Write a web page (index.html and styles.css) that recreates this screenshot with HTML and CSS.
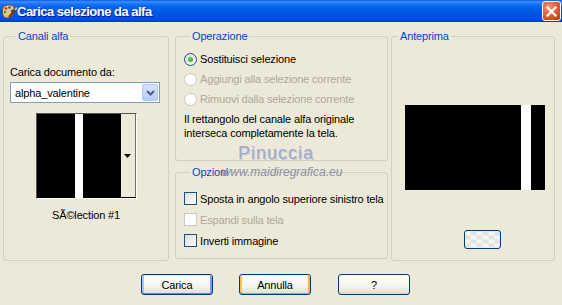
FILE: index.html
```html
<!DOCTYPE html>
<html lang="it">
<head>
    <meta charset="UTF-8">
    <title>Carica selezione da alfa</title>
    <link rel="stylesheet" href="styles.css">
</head>
<body>
    <div class="window">
        <div class="titlebar">
            <svg class="app-icon" width="16" height="16" viewBox="0 0 16 16">
                <path d="M2 4 C3 1 9 0 12 2 C14 3.5 13 6 11 6 C9.5 6 10 8 11.5 9 C13 10.5 10 14 6 14 C2 14 0.5 9 2 4 Z" fill="#E8C98A" stroke="#7A4E1E" stroke-width="1"/>
                <circle cx="5" cy="4.5" r="1.3" fill="#E02020"/>
                <circle cx="8.5" cy="3.5" r="1.2" fill="#2050E0"/>
                <circle cx="4" cy="8" r="1.2" fill="#20A020"/>
                <circle cx="6.5" cy="11" r="1.2" fill="#F0D000"/>
                <path d="M8 13 L15 5" stroke="#6B3A10" stroke-width="2"/>
                <path d="M14 6 L16 3.5" stroke="#C0C0C0" stroke-width="2"/>
            </svg>
            <span class="title">Carica selezione da alfa</span>
            <button class="close-btn">
                <svg width="11" height="11" viewBox="0 0 11 11">
                    <path d="M1.5 1.5 L9.5 9.5 M9.5 1.5 L1.5 9.5" stroke="#fff" stroke-width="2.2" stroke-linecap="square"/>
                </svg>
            </button>
        </div>

        <div class="dialog">
            <fieldset class="group channels">
                <legend>Canali alfa</legend>
                <div class="field-label">Carica documento da:</div>
                <div class="combo">
                    <span class="combo-text">alpha_valentine</span>
                    <span class="combo-btn">
                        <svg width="9" height="6" viewBox="0 0 9 6">
                            <path d="M1 1 L4.5 4.5 L8 1" fill="none" stroke="#4D6185" stroke-width="2"/>
                        </svg>
                    </span>
                </div>
                <div class="thumb">
                    <div class="thumb-img"></div>
                    <div class="thumb-drop">
                        <svg width="7" height="4" viewBox="0 0 7 4"><path d="M0 0 H7 L3.5 4 Z" fill="#000"/></svg>
                    </div>
                </div>
                <div class="thumb-caption">SÃ©lection #1</div>
            </fieldset>

            <div class="middle">
                <fieldset class="group operation">
                    <legend>Operazione</legend>
                    <div class="option">
                        <span class="radio checked"></span>
                        <span>Sostituisci selezione</span>
                    </div>
                    <div class="option disabled">
                        <span class="radio"></span>
                        <span>Aggiungi alla selezione corrente</span>
                    </div>
                    <div class="option disabled">
                        <span class="radio"></span>
                        <span>Rimuovi dalla selezione corrente</span>
                    </div>
                    <p class="info">Il rettangolo del canale alfa originale<br>interseca completamente la tela.</p>
                </fieldset>

                <fieldset class="group options">
                    <legend>Opzioni</legend>
                    <div class="option check-row">
                        <span class="checkbox"></span>
                        <span>Sposta in angolo superiore sinistro tela</span>
                    </div>
                    <div class="option check-row disabled">
                        <span class="checkbox"></span>
                        <span>Espandi sulla tela</span>
                    </div>
                    <div class="option check-row">
                        <span class="checkbox"></span>
                        <span>Inverti immagine</span>
                    </div>
                </fieldset>
            </div>

            <fieldset class="group preview">
                <legend>Anteprima</legend>
                <div class="preview-img"></div>
                <button class="zoom-btn"></button>
            </fieldset>
        </div>

        <div class="buttons">
            <button class="btn default">Carica</button>
            <button class="btn hover">Annulla</button>
            <button class="btn">?</button>
        </div>

        <div class="watermark">
            <div class="wm-name">Pinuccia</div>
            <div class="wm-url">www.maidiregrafica.eu</div>
        </div>
    </div>
</body>
</html>
```

FILE: styles.css
```css
* {
    box-sizing: border-box;
}
body {
    margin: 0;
    background: #ECE9D8;
    font-family: 'Liberation Sans', Arial, sans-serif;
    font-size: 11px;
    letter-spacing: -0.15px;
    color: #000;
}
.window {
    position: relative;
    width: 562px;
    height: 305px;
    overflow: hidden;
    background: #ECE9D8;
}

/* title bar */
.titlebar {
    height: 22px;
    display: flex;
    align-items: center;
    padding-left: 1px;
    background: linear-gradient(to bottom, #0A5EEB 0, #3D8EFA 2px, #1873F6 4px, #0460EA 8px, #0055E3 13px, #0052DE 18px, #0046CC 21px, #003CB0 22px);
}
.app-icon {
    flex: none;
    margin-top: 1px;
}
.title {
    margin-left: 0;
    color: #fff;
    font-weight: bold;
    font-size: 13px;
    letter-spacing: -0.5px;
    text-shadow: 1px 1px 0 #0A1E8C;
}
.close-btn {
    margin-left: auto;
    margin-right: 1px;
    width: 19px;
    height: 20px;
    padding: 0;
    display: flex;
    align-items: center;
    justify-content: center;
    border: 1px solid #fff;
    border-radius: 3px;
    background: radial-gradient(circle at 35% 30%, #F29B7E 0, #E56A45 35%, #D4451E 80%, #C23A14 100%);
}

/* main area */
.dialog {
    display: flex;
    align-items: stretch;
    height: 231px;
    margin-top: 8px;
    padding-left: 3px;
}
.group {
    margin: 0;
    padding: 0;
    min-width: 0;
    border: 1px solid #D0D0BF;
    border-radius: 3px;
}
.group legend {
    margin-left: 6px;
    padding: 0 2px;
    color: #0046D5;
    line-height: 13px;
}
.channels {
    width: 166px;
    padding: 0 6px;
}
.field-label {
    margin-top: 23px;
    line-height: 13px;
}
.combo {
    display: flex;
    align-items: center;
    margin-top: 3px;
    width: 150px;
    height: 21px;
    background: #fff;
    border: 1px solid #7F9DB9;
    padding: 1px;
}
.combo-text {
    flex: 1;
    padding-left: 3px;
}
.combo-btn {
    width: 16px;
    height: 17px;
    display: flex;
    align-items: center;
    justify-content: center;
    border-radius: 2px;
    background: linear-gradient(to bottom, #D6E2FD, #B7CBF8);
    border: 1px solid #B6C8F2;
}
.thumb {
    display: flex;
    width: 101px;
    height: 86px;
    margin: 10px auto 0;
    border: 1px solid #fff;
    border-top-color: #555;
    border-left-color: #555;
    background: #000;
}
.thumb-img {
    width: 83px;
    background: linear-gradient(to right, #000 38px, #fff 38px, #fff 46px, #000 46px);
}
.thumb-drop {
    flex: 1;
    display: flex;
    align-items: center;
    justify-content: center;
    padding-top: 1px;
    background: #ECE9D8;
    border-left: 1px solid #000;
    border-bottom: 1px solid #000;
    border-right: 1px solid #716F64;
}
.thumb-caption {
    margin-top: 10px;
    text-align: center;
    line-height: 13px;
}

.middle {
    width: 213px;
    margin-left: 6px;
    display: flex;
    flex-direction: column;
}
.operation {
    height: 131px;
    padding: 6px 8px 0;
}
.options {
    flex: 1;
    margin-top: 5px;
    margin-bottom: 2px;
    padding: 9px 8px 0;
}
.option {
    display: flex;
    align-items: center;
    gap: 3px;
    height: 20px;
    white-space: nowrap;
}
.check-row {
    height: 21px;
}
.option.disabled {
    color: #ACA899;
}
.radio {
    flex: none;
    width: 13px;
    height: 13px;
    border-radius: 50%;
    border: 1px solid #1C5180;
    background: linear-gradient(135deg, #DCDCD7, #fff);
    display: flex;
    align-items: center;
    justify-content: center;
}
.radio.checked::after {
    content: "";
    width: 5px;
    height: 5px;
    border-radius: 50%;
    background: radial-gradient(circle at 40% 40%, #5FD35F, #21A121);
}
.disabled .radio,
.disabled .checkbox {
    border-color: #CAC8BB;
    background: #fff;
}
.checkbox {
    flex: none;
    width: 13px;
    height: 13px;
    border: 1px solid #1C5180;
    background: linear-gradient(135deg, #DCDCD7, #fff);
}
.info {
    margin: 3px 0 0;
    line-height: 14px;
}

.preview {
    width: 164px;
    margin-left: 3px;
    padding: 0;
}
.preview-img {
    width: 140px;
    height: 85px;
    margin: 62px 0 0 13px;
    background: linear-gradient(to right, #000 116px, #fff 116px, #fff 126px, #000 126px);
}
.zoom-btn {
    display: block;
    width: 37px;
    height: 19px;
    margin: 40px 0 0 72px;
    padding: 0;
    border: 1px solid #003C74;
    border-radius: 3px;
    background:
        repeating-conic-gradient(#F4F4F0 0 25%, #E4E2DA 0 50%) 50% 50% / 12px 8px,
        #F4F4F0;
}

/* bottom buttons */
.buttons {
    display: flex;
    gap: 26px;
    margin-top: 13px;
    padding-left: 141px;
}
.btn {
    width: 72px;
    height: 21px;
    padding: 0;
    font-family: inherit;
    font-size: 11px;
    letter-spacing: inherit;
    color: #000;
    border: 1px solid #003C74;
    border-radius: 3px;
    background: linear-gradient(to bottom, #FFFFFF 0, #F3F3EF 60%, #E5E4DC 90%, #D6D0C5 100%);
}
.btn.default {
    box-shadow: inset 0 1px 0 #CEE7FF, inset 0 -1px 0 #6982EE, inset 2px 0 0 #A7C2F3, inset -2px 0 0 #7A9AEA;
}
.btn.hover {
    box-shadow: inset 0 1px 0 #FFF0CF, inset 0 -1px 0 #E5A01A, inset 2px 0 0 #F9C35A, inset -2px 0 0 #F4B642;
}
.btn:last-child {
    margin-left: 1px;
}

/* watermark over the image */
.watermark {
    position: absolute;
    left: 200px;
    top: 143px;
    width: 150px;
    text-align: center;
    pointer-events: none;
}
.wm-name {
    font-size: 18px;
    line-height: 20px;
    letter-spacing: 1px;
    color: #A3A8C9;
    text-shadow: 1px 1px 0 #C9CBDC;
    margin-left: 2px;
}
.wm-url {
    margin-top: 2px;
    font-size: 12px;
    font-style: italic;
    line-height: 14px;
    letter-spacing: 0;
    color: #8A8FAA;
    margin-left: 14px;
}
```
